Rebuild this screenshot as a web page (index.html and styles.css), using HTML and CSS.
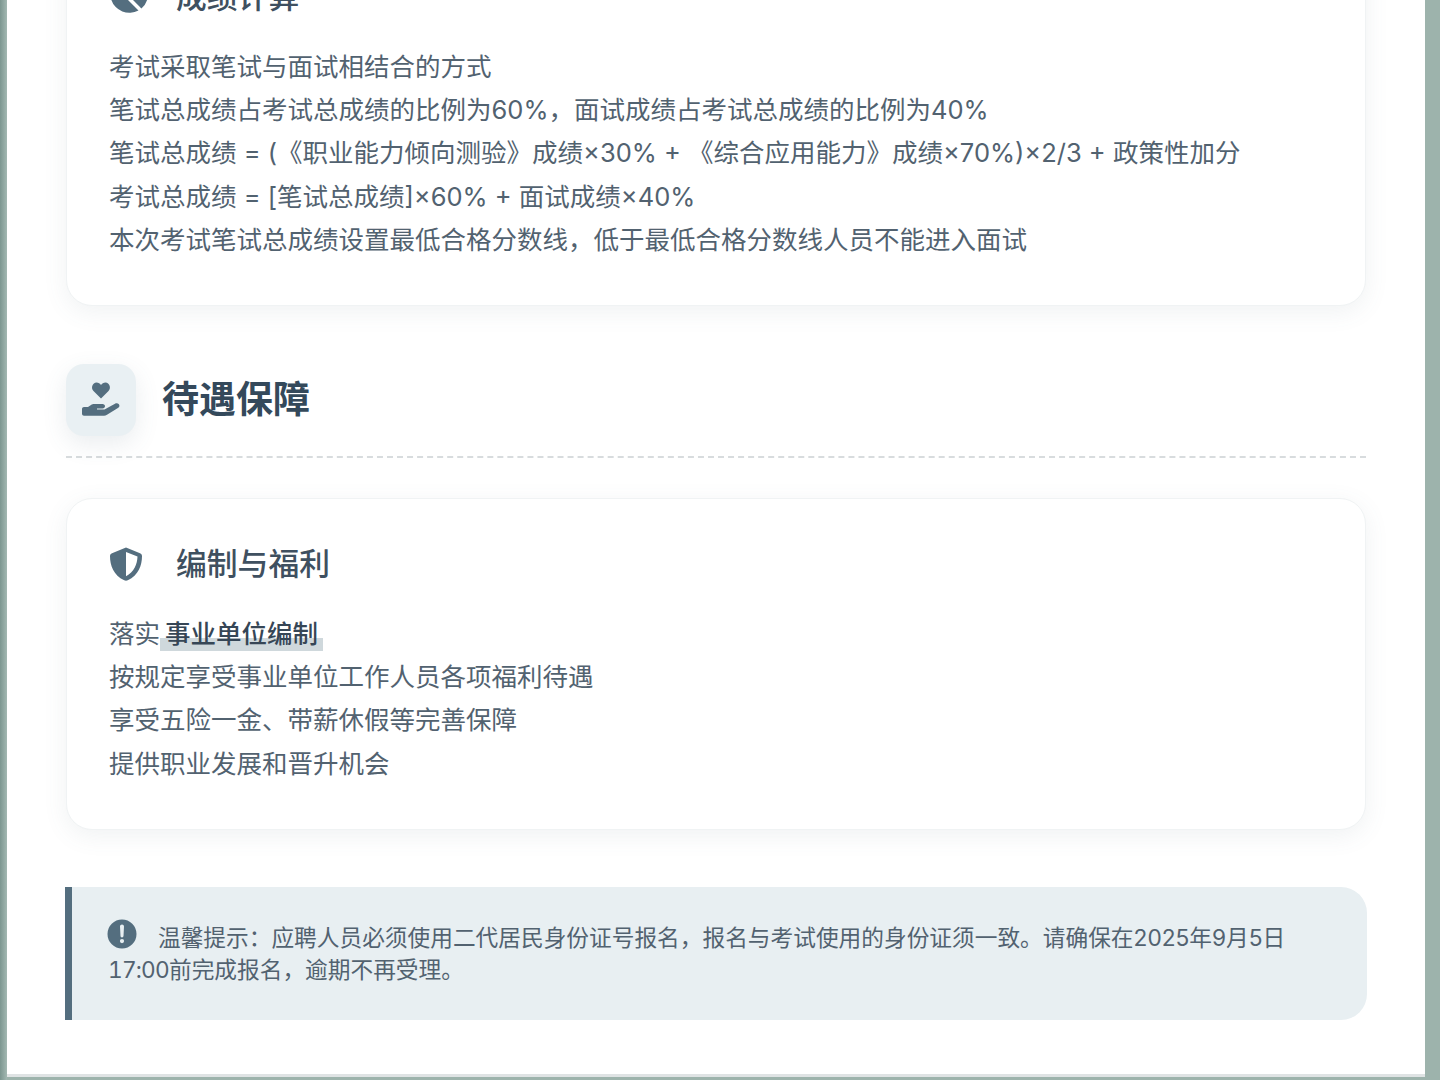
FILE: index.html
```html
<!DOCTYPE html>
<html lang="zh-CN">
<head>
<meta charset="utf-8">
<title>待遇保障</title>
<link rel="stylesheet" href="styles.css">
</head>
<body>
<main class="page">
  <article class="card">
    <h3 class="card-title">
      <svg class="card-icon pie" viewBox="0 0 40 40"><path d="M18-2A19 19 0 1 0 29.500 33.500L18 22z"/><path d="M22 21 32.400 31.400A19 19 0 0 0 39 19z"/><path d="M22-2A19 19 0 0 1 39 15H22z"/></svg>
      <span>成绩计算</span>
    </h3>
    <ul class="lines">
      <li>考试采取笔试与面试相结合的方式</li>
      <li>笔试总成绩占考试总成绩的比例为60%，面试成绩占考试总成绩的比例为40%</li>
      <li>笔试总成绩 = (《职业能力倾向测验》成绩×30% + 《综合应用能力》成绩×70%)×2/3 + 政策性加分</li>
      <li>考试总成绩 = [笔试总成绩]×60% + 面试成绩×40%</li>
      <li>本次考试笔试总成绩设置最低合格分数线，低于最低合格分数线人员不能进入面试</li>
    </ul>
  </article>

  <header class="section-head">
    <div class="section-icon">
      <svg viewBox="0 0 40 36" width="40" height="36"><path d="M20 16.500 12.500 9C9.500 6 11.500.5 15.500.5 17.500.5 19 1.500 20 3 21 1.500 22.500.5 24.500.5 28.500.5 30.500 6 27.500 9z"/><path d="M1 27c0-1.100.9-2 2-2h4l3-2c1-.7 2-1 3.500-1h8c1.500 0 2.500 1 2.500 2.200s-1 2.300-2.500 2.300H16v1h7.500l10.500-5.800c1.200-.8 3-.6 3.900.5.900 1.200.6 2.800-.6 3.600l-11.300 7c-1 .6-2 .9-3 .9H3c-1.100 0-2-.9-2-2z"/></svg>
    </div>
    <h2 class="section-title">待遇保障</h2>
  </header>

  <article class="card">
    <h3 class="card-title">
      <svg class="card-icon" viewBox="0 0 32 34"><path fill-rule="evenodd" d="M16 .5 30 6.200c1.200.5 2 1.500 2 2.800 0 9-3.500 19.500-14.200 24.300-1.200.5-2.400.5-3.600 0C3.500 28.500 0 18 0 9c0-1.300.8-2.300 2-2.800zM16 5v24.300C24 25.500 27.300 17 27.500 9.600z"/></svg>
      <span>编制与福利</span>
    </h3>
    <ul class="lines">
      <li>落实<strong class="mark">事业单位编制</strong></li>
      <li>按规定享受事业单位工作人员各项福利待遇</li>
      <li>享受五险一金、带薪休假等完善保障</li>
      <li>提供职业发展和晋升机会</li>
    </ul>
  </article>

  <aside class="notice">
    <svg class="notice-icon" viewBox="0 0 30 30"><path fill-rule="evenodd" d="M15 .5a14.500 14.500 0 1 1 0 29 14.500 14.500 0 0 1 0-29zM13 7.500l.5 9.500c0 .8.700 1.400 1.500 1.400s1.400-.6 1.500-1.400l.5-9.500c0-1.100-.9-1.900-2-1.900s-2 .8-2 1.900zM15 20a2.100 2.100 0 1 0 0 4.200 2.100 2.100 0 0 0 0-4.200z"/></svg>温馨提示：应聘人员必须使用二代居民身份证号报名，报名与考试使用的身份证须一致。请确保在2025年9月5日<span class="time">17:00</span>前完成报名，逾期不再受理。
  </aside>
</main>
</body>
</html>
```

FILE: styles.css
```css
* {
  box-sizing: border-box;
}

html,
body {
  margin: 0;
  height: 1080px;
  overflow: hidden;
}

body {
  display: flex;
  justify-content: flex-start;
  background: linear-gradient(90deg, #7c9690 0, #a3b8b2 7px, #9db3ac 7px);
  font-family: Inter, "Noto Sans CJK SC", sans-serif;
  text-spacing-trim: space-all;
  color: #526270;
}

.page {
  width: 1418px;
  height: 1146px;
  margin: -69px 0 0 7px;
  padding: 0 59px;
  background: #fff;
  border-bottom: 3px solid #dfe3e4;
  display: flex;
  flex-direction: column;
}

.card {
  background: #fff;
  border: 1px solid #f0f3f4;
  border-radius: 26px;
  box-shadow: 0 6px 24px rgba(84, 110, 122, 0.09);
  padding: 44px 42px 44px;
  width: 1300px;
}

.card-title {
  display: flex;
  align-items: center;
  gap: 33px;
  margin: 0 0 27px;
  font-size: 30.800px;
  line-height: 42px;
  font-weight: 500;
  color: #3f5060;
}

.card-icon {
  width: 34px;
  height: 34px;
  fill: #546e7f;
  flex: none;
}

.pie {
  width: 40px;
  height: 40px;
  margin-right: -6px;
  overflow: visible;
}

.lines {
  list-style: none;
  margin: 0;
  padding: 0;
  font-size: 25.500px;
  line-height: 43.200px;
}

.mark {
  font-weight: 500;
  color: #364656;
  padding: 0 5px 2px;
  background: linear-gradient(transparent 62%, #cfd8dc 62%);
}

.section-head {
  display: flex;
  align-items: center;
  gap: 26px;
  margin-top: 58px;
  padding-bottom: 20px;
  border-bottom: 2px dashed #d8dcde;
  margin-bottom: 40px;
  width: 1300px;
}

.section-icon {
  width: 70px;
  height: 72px;
  border-radius: 18px;
  background: #e9f0f3;
  box-shadow: 0 8px 24px rgba(84, 110, 122, 0.12);
  display: flex;
  align-items: center;
  justify-content: center;
  fill: #546e7f;
}

.section-title {
  margin: 0;
  font-size: 37px;
  line-height: 50px;
  font-weight: 700;
  color: #34495b;
}

.notice {
  margin: 57px 0 0 -1px;
  width: 1302px;
  height: 133px;
  padding: 32px 50px 0 36px;
  background: #e8eff2;
  border-left: 7px solid #546e7f;
  border-radius: 0 26px 26px 0;
  font-size: 22.700px;
  line-height: 32px;
}

.notice-icon {
  display: inline-block;
  width: 30px;
  height: 30px;
  margin: 0 21px 0 -1px;
  vertical-align: -3px;
  fill: #546e7f;
}

.time {
  font-variant-numeric: tabular-nums;
  letter-spacing: -0.800px;
}
```
